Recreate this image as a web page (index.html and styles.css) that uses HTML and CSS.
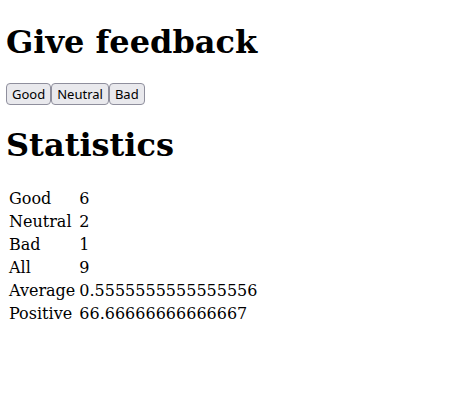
FILE: index.html
```html
<!DOCTYPE html>
<html>
<head>
<meta charset="utf-8">
<link rel="stylesheet" href="styles.css">
</head>
<body>
<div id="root">
<div>
<h1>Give feedback</h1>
<div class="buttons"><button class="btn">Good</button><button class="btn">Neutral</button><button class="btn">Bad</button></div>
<h1>Statistics</h1>
<table class="stats">
<tbody>
<tr><td>Good</td><td>6</td></tr>
<tr><td>Neutral</td><td>2</td></tr>
<tr><td>Bad</td><td>1</td></tr>
<tr><td>All</td><td>9</td></tr>
<tr><td>Average</td><td>0.5555555555555556</td></tr>
<tr><td>Positive</td><td>66.66666666666667</td></tr>
</tbody>
</table>
</div>
</div>
</body>
</html>
```
FILE: styles.css
```css
body {
  font-family: "DejaVu Serif", serif;
  margin: 2px 6px 8px;
}
.btn {
  font-family: "Noto Sans", sans-serif;
  font-size: 13px;
  color: #000;
  background: #e9e9ed;
  border: 1px solid #8f8f9d;
  border-radius: 4px;
  padding: 1px 5px;
  margin: 0;
}
```
